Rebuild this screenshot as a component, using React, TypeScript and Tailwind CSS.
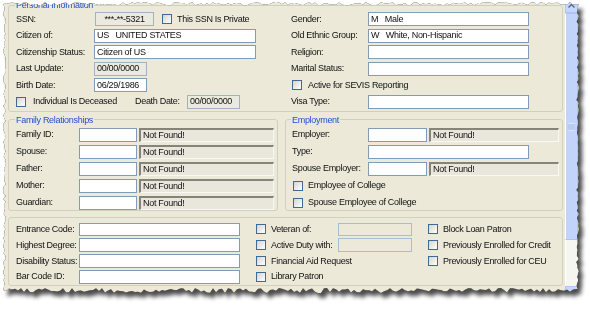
import React from "react";

// torn paper edge, computed once at runtime
const jit = (i: number, seed: number) => {
  const v = Math.sin(i * 12.9898 + seed * 78.233) * 43758.5453;
  return v - Math.floor(v);
};

function tornPath(w: number, h: number) {
  const pts: string[] = [];
  for (let x = 1; x <= w - 5; x += 3) pts.push(`${x}px ${2 + jit(x, 1) * 3.5}px`);
  for (let y = 4; y <= h - 6; y += 3) pts.push(`${w - 6 + jit(y, 2) * 3}px ${y}px`);
  for (let x = w - 6; x >= 1; x -= 3) pts.push(`${x}px ${h - 8 + jit(x, 3) * 5}px`);
  for (let y = h - 7; y >= 4; y -= 3) pts.push(`${1 + jit(y, 4) * 3}px ${y}px`);
  return `polygon(${pts.join(",")})`;
}

type Tone = "edit" | "off" | "sunk" | "pale";

const toneCls: Record<Tone, string> = {
  edit: "bg-white border border-[#7F9DB9]",
  off: "bg-[#EBEADF] border border-[#A3B1C0]",
  pale: "bg-[#ECE9D8] border border-[#A9BDD0]",
  sunk: "bg-[#E9E7DC] border-t-2 border-l-2 border-r border-b border-t-[#85837A] border-l-[#85837A] border-r-[#F8F8F4] border-b-[#F8F8F4]",
};

const Field = ({
  tone = "edit",
  className = "",
  children,
}: {
  tone?: Tone;
  className?: string;
  children?: React.ReactNode;
}) => (
  <div className={`h-full shrink-0 flex items-center px-[2px] whitespace-pre ${toneCls[tone]} ${className}`}>
    {children}
  </div>
);

const Check = ({ className = "" }: { className?: string }) => (
  <span className={`block w-[10px] h-[10px] shrink-0 border border-[#3D6A99] bg-linear-to-br from-[#D6D5CC] to-white ${className}`} />
);

const Row = ({ className = "h-[14px]", children }: { className?: string; children: React.ReactNode }) => (
  <div className={`flex items-center ${className}`}>{children}</div>
);

const Legend = ({ children }: { children: React.ReactNode }) => (
  <legend className="px-[1px] -ml-[1px] leading-[10px] text-[#1F4FD0]">{children}</legend>
);

const Scrollbar = () => (
  <div className="w-[13px] shrink-0 flex flex-col">
    {/* up button */}
    <div className="h-[13px] bg-[#C6D6FC] border border-[#B1C5F3] flex items-start justify-center pt-[3px]">
      <svg width="7" height="4" viewBox="0 0 7 4">
        <path d="M0.5 3.5 L3.5 0.5 L6.5 3.5" fill="none" stroke="#4D6185" strokeWidth="1.3" />
      </svg>
    </div>
    {/* thumb */}
    <div className="h-[227px] bg-[#C3D4FC] border border-[#B0C4F2] border-l-white flex items-center justify-center">
      <svg width="7" height="8" viewBox="0 0 7 8">
        <path d="M0 1h7M0 3h7M0 5h7M0 7h7" stroke="#EEF3FF" strokeWidth="1" />
        <path d="M0 2h7M0 4h7M0 6h7" stroke="#9DB3E6" strokeWidth="1" />
      </svg>
    </div>
    <div className="flex-1 bg-[#F6F6F1] border-l border-l-white" />
    {/* down button */}
    <div className="h-[10px] bg-[#C6D6FC] border border-[#B1C5F3]" />
  </div>
);

export default function App() {
  const clip = React.useMemo(() => tornPath(580, 296), []);

  return (
    <div className="w-[590px] h-[310px] bg-white font-['Liberation_Sans',Arial,sans-serif] text-[9px] tracking-[-0.3px] leading-none text-[#111]">
      <div className="ml-[2px] w-[580px] h-[296px] [filter:drop-shadow(0_0_0.6px_rgba(0,0,0,0.9))_drop-shadow(4px_5px_2px_rgba(0,0,0,0.7))]">
        <div className="flex w-full h-full bg-[#ECE9D8]" style={{ clipPath: clip }}>
          <div className="w-[563px] shrink-0 flex flex-col pl-[6px] pr-[2px]">
            {/* Personal Information */}
            <fieldset className="border border-[#D0D0BF] rounded-[3px] px-[7px] pt-[2px] pb-[2px]">
              <Legend>Personal Information</Legend>
              <div className="flex">
                <div className="w-[275px] shrink-0 flex flex-col gap-[2.6px]">
                  <Row>
                    <span className="w-[79px] shrink-0">SSN:</span>
                    <Field tone="off" className="w-[59px] justify-center">***-**-5321</Field>
                    <Check className="ml-[8px]" />
                    <span className="ml-[5px]">This SSN Is Private</span>
                  </Row>
                  <Row>
                    <span className="w-[78px] shrink-0">Citizen of:</span>
                    <Field className="w-[162px]">US   UNITED STATES</Field>
                  </Row>
                  <Row>
                    <span className="w-[78px] shrink-0">Citizenship Status:</span>
                    <Field className="w-[162px]">Citizen of US</Field>
                  </Row>
                  <Row>
                    <span className="w-[78px] shrink-0">Last Update:</span>
                    <Field tone="off" className="w-[53px]">00/00/0000</Field>
                  </Row>
                  <Row>
                    <span className="w-[78px] shrink-0">Birth Date:</span>
                    <Field className="w-[53px]">06/29/1986</Field>
                  </Row>
                  <Row>
                    <Check />
                    <span className="ml-[7px] w-[102px] shrink-0">Individual Is Deceased</span>
                    <span className="w-[52px] shrink-0">Death Date:</span>
                    <Field tone="off" className="w-[53px]">00/00/0000</Field>
                  </Row>
                </div>
                <div className="flex-1 flex flex-col gap-[2.6px]">
                  <Row>
                    <span className="w-[77px] shrink-0">Gender:</span>
                    <Field className="w-[161px]">M   Male</Field>
                  </Row>
                  <Row>
                    <span className="w-[77px] shrink-0">Old Ethnic Group:</span>
                    <Field className="w-[161px]">W   White, Non-Hispanic</Field>
                  </Row>
                  <Row>
                    <span className="w-[77px] shrink-0">Religion:</span>
                    <Field className="w-[161px]" />
                  </Row>
                  <Row>
                    <span className="w-[77px] shrink-0">Marital Status:</span>
                    <Field className="w-[161px]" />
                  </Row>
                  <Row>
                    <Check className="ml-[1px]" />
                    <span className="ml-[6px]">Active for SEVIS Reporting</span>
                  </Row>
                  <Row>
                    <span className="w-[77px] shrink-0">Visa Type:</span>
                    <Field className="w-[161px]" />
                  </Row>
                </div>
              </div>
            </fieldset>

            {/* Family / Employment */}
            <div className="flex gap-[7px] mt-[3px]">
              <fieldset className="w-[270px] shrink-0 border border-[#D0D0BF] rounded-[3px] pl-[7px] pr-[2px] pt-[3px] pb-0">
                <Legend>Family Relationships</Legend>
                <div className="flex flex-col gap-[2.9px]">
                  {["Family ID:", "Spouse:", "Father:", "Mother:", "Guardian:"].map((l) => (
                    <Row key={l}>
                      <span className="w-[63px] shrink-0">{l}</span>
                      <Field className="w-[58px]" />
                      <Field tone="sunk" className="w-[135px] ml-[2px]">Not Found!</Field>
                    </Row>
                  ))}
                </div>
              </fieldset>
              <fieldset className="flex-1 border border-[#D0D0BF] rounded-[3px] pl-[6px] pr-[2px] pt-[3px] pb-0">
                <Legend>Employment</Legend>
                <div className="flex flex-col gap-[2.9px]">
                  <Row>
                    <span className="w-[76px] shrink-0">Employer:</span>
                    <Field className="w-[59px]" />
                    <Field tone="sunk" className="w-[130px] ml-[2px]">Not Found!</Field>
                  </Row>
                  <Row>
                    <span className="w-[76px] shrink-0">Type:</span>
                    <Field className="w-[161px]" />
                  </Row>
                  <Row>
                    <span className="w-[76px] shrink-0">Spouse Employer:</span>
                    <Field className="w-[59px]" />
                    <Field tone="sunk" className="w-[130px] ml-[2px]">Not Found!</Field>
                  </Row>
                  <Row>
                    <Check className="ml-[1px]" />
                    <span className="ml-[5px]">Employee of College</span>
                  </Row>
                  <Row>
                    <Check className="ml-[1px]" />
                    <span className="ml-[5px]">Spouse Employee of College</span>
                  </Row>
                </div>
              </fieldset>
            </div>

            {/* Misc */}
            <div className="mt-[6px] border border-[#D0D0BF] rounded-[3px] pl-[7px] pt-[5px] pb-[1.5px] flex">
              <div className="w-[224px] shrink-0 flex flex-col gap-[2.4px]">
                {["Entrance Code:", "Highest Degree:", "Disability Status:", "Bar Code ID:"].map((l) => (
                  <Row key={l} className="h-[13.5px]">
                    <span className="w-[63px] shrink-0 whitespace-nowrap">{l}</span>
                    <Field className="w-[161px]" />
                  </Row>
                ))}
              </div>
              <div className="ml-[16px] w-[156px] shrink-0 flex flex-col gap-[2.4px]">
                <Row className="h-[13.5px]">
                  <Check />
                  <span className="ml-[5px] w-[67px] shrink-0">Veteran of:</span>
                  <Field tone="pale" className="w-[74px]" />
                </Row>
                <Row className="h-[13.5px]">
                  <Check />
                  <span className="ml-[5px] w-[67px] shrink-0 whitespace-nowrap">Active Duty with:</span>
                  <Field tone="pale" className="w-[74px]" />
                </Row>
                <Row className="h-[13.5px]">
                  <Check />
                  <span className="ml-[5px]">Financial Aid Request</span>
                </Row>
                <Row className="h-[13.5px]">
                  <Check />
                  <span className="ml-[5px]">Library Patron</span>
                </Row>
              </div>
              <div className="ml-[16px] flex flex-col gap-[2.4px]">
                {["Block Loan Patron", "Previously Enrolled for Credit", "Previously Enrolled for CEU"].map((l) => (
                  <Row key={l} className="h-[13.5px]">
                    <Check />
                    <span className="ml-[5px]">{l}</span>
                  </Row>
                ))}
              </div>
            </div>
          </div>
          <Scrollbar />
        </div>
      </div>
    </div>
  );
}
